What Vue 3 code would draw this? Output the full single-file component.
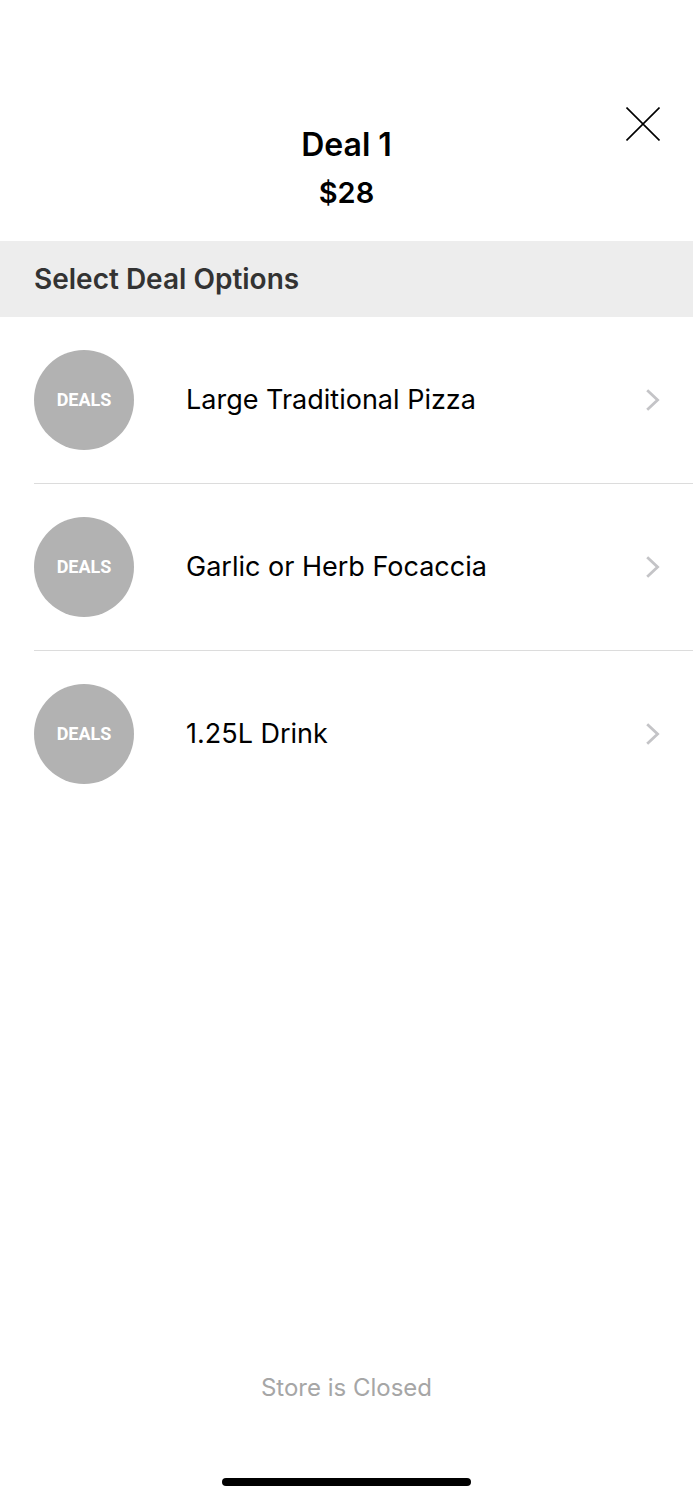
<script setup>
const options = ['Large Traditional Pizza', 'Garlic or Herb Focaccia', '1.25L Drink']
</script>

<template>
  <div class="screen">
    <header class="header">
      <button class="close" type="button" aria-label="Close">
        <svg viewBox="0 0 34 34" aria-hidden="true"><path d="M0.5 0.5 33.5 33.5M33.5 0.5 0.5 33.5" /></svg>
      </button>
      <h1 class="title">Deal 1</h1>
      <p class="price">$28</p>
    </header>
    <h2 class="section">Select Deal Options</h2>
    <ul class="list">
      <li v-for="option in options" :key="option" class="item">
        <button class="row" type="button">
          <span class="badge">DEALS</span>
          <span class="label">{{ option }}</span>
          <svg class="chevron" viewBox="0 0 14 22" aria-hidden="true"><path d="M1.2 1.2 11.6 11 1.2 20.8" /></svg>
        </button>
      </li>
    </ul>
    <footer class="footer">
      <p class="status">Store is Closed</p>
      <div class="home"></div>
    </footer>
  </div>
</template>

<style>
body {
  background: #fff;
}
</style>

<style scoped>
.screen {
  display: flex;
  flex-direction: column;
  min-height: 100vh;
  color: #000;
  font-family: Inter, "Liberation Sans", sans-serif;
}
.header {
  position: relative;
  padding: 121px 0 24px;
  text-align: center;
}
.close {
  position: absolute;
  top: 107px;
  right: 33px;
  width: 34px;
  height: 34px;
  padding: 0;
  border: 0;
  background: none;
}
.close svg {
  display: block;
  width: 34px;
  height: 34px;
  fill: none;
  stroke: #000;
  stroke-width: 1.6;
}
.title,
.price {
  margin: 0;
  font-weight: 600;
  line-height: 48px;
}
.title {
  font-size: 32px;
}
.price {
  font-size: 29px;
}
.section {
  margin: 0;
  padding: 0 34px;
  background: #ededed;
  color: #333;
  font-size: 28px;
  font-weight: 600;
  line-height: 76px;
}
.list {
  margin: 0;
  padding: 0 0 0 34px;
  list-style: none;
}
.item + .item {
  border-top: 1px solid #dcdcdc;
}
.row {
  display: flex;
  align-items: center;
  width: 100%;
  padding: 33px 33px 33px 0;
  border: 0;
  background: none;
  color: inherit;
  font: inherit;
  text-align: left;
}
.badge {
  flex: none;
  width: 100px;
  border-radius: 50%;
  background: #b2b2b2;
  color: #fff;
  font-family: Roboto, sans-serif;
  font-size: 18px;
  font-weight: 700;
  line-height: 100px;
  text-align: center;
}
.label {
  flex: 1;
  margin-left: 52px;
  font-size: 27px;
  line-height: 36px;
}
.chevron {
  flex: none;
  width: 14px;
  height: 22px;
  fill: none;
  stroke: #c4c4c7;
  stroke-width: 2.8;
}
.footer {
  margin-top: auto;
  padding-bottom: 14px;
}
.status {
  margin: 0 0 72px;
  color: #a6a6a6;
  font-size: 24px;
  line-height: 36px;
  text-align: center;
}
.home {
  width: 36%;
  height: 8px;
  margin: 0 auto;
  border-radius: 4px;
  background: #000;
}
</style>
